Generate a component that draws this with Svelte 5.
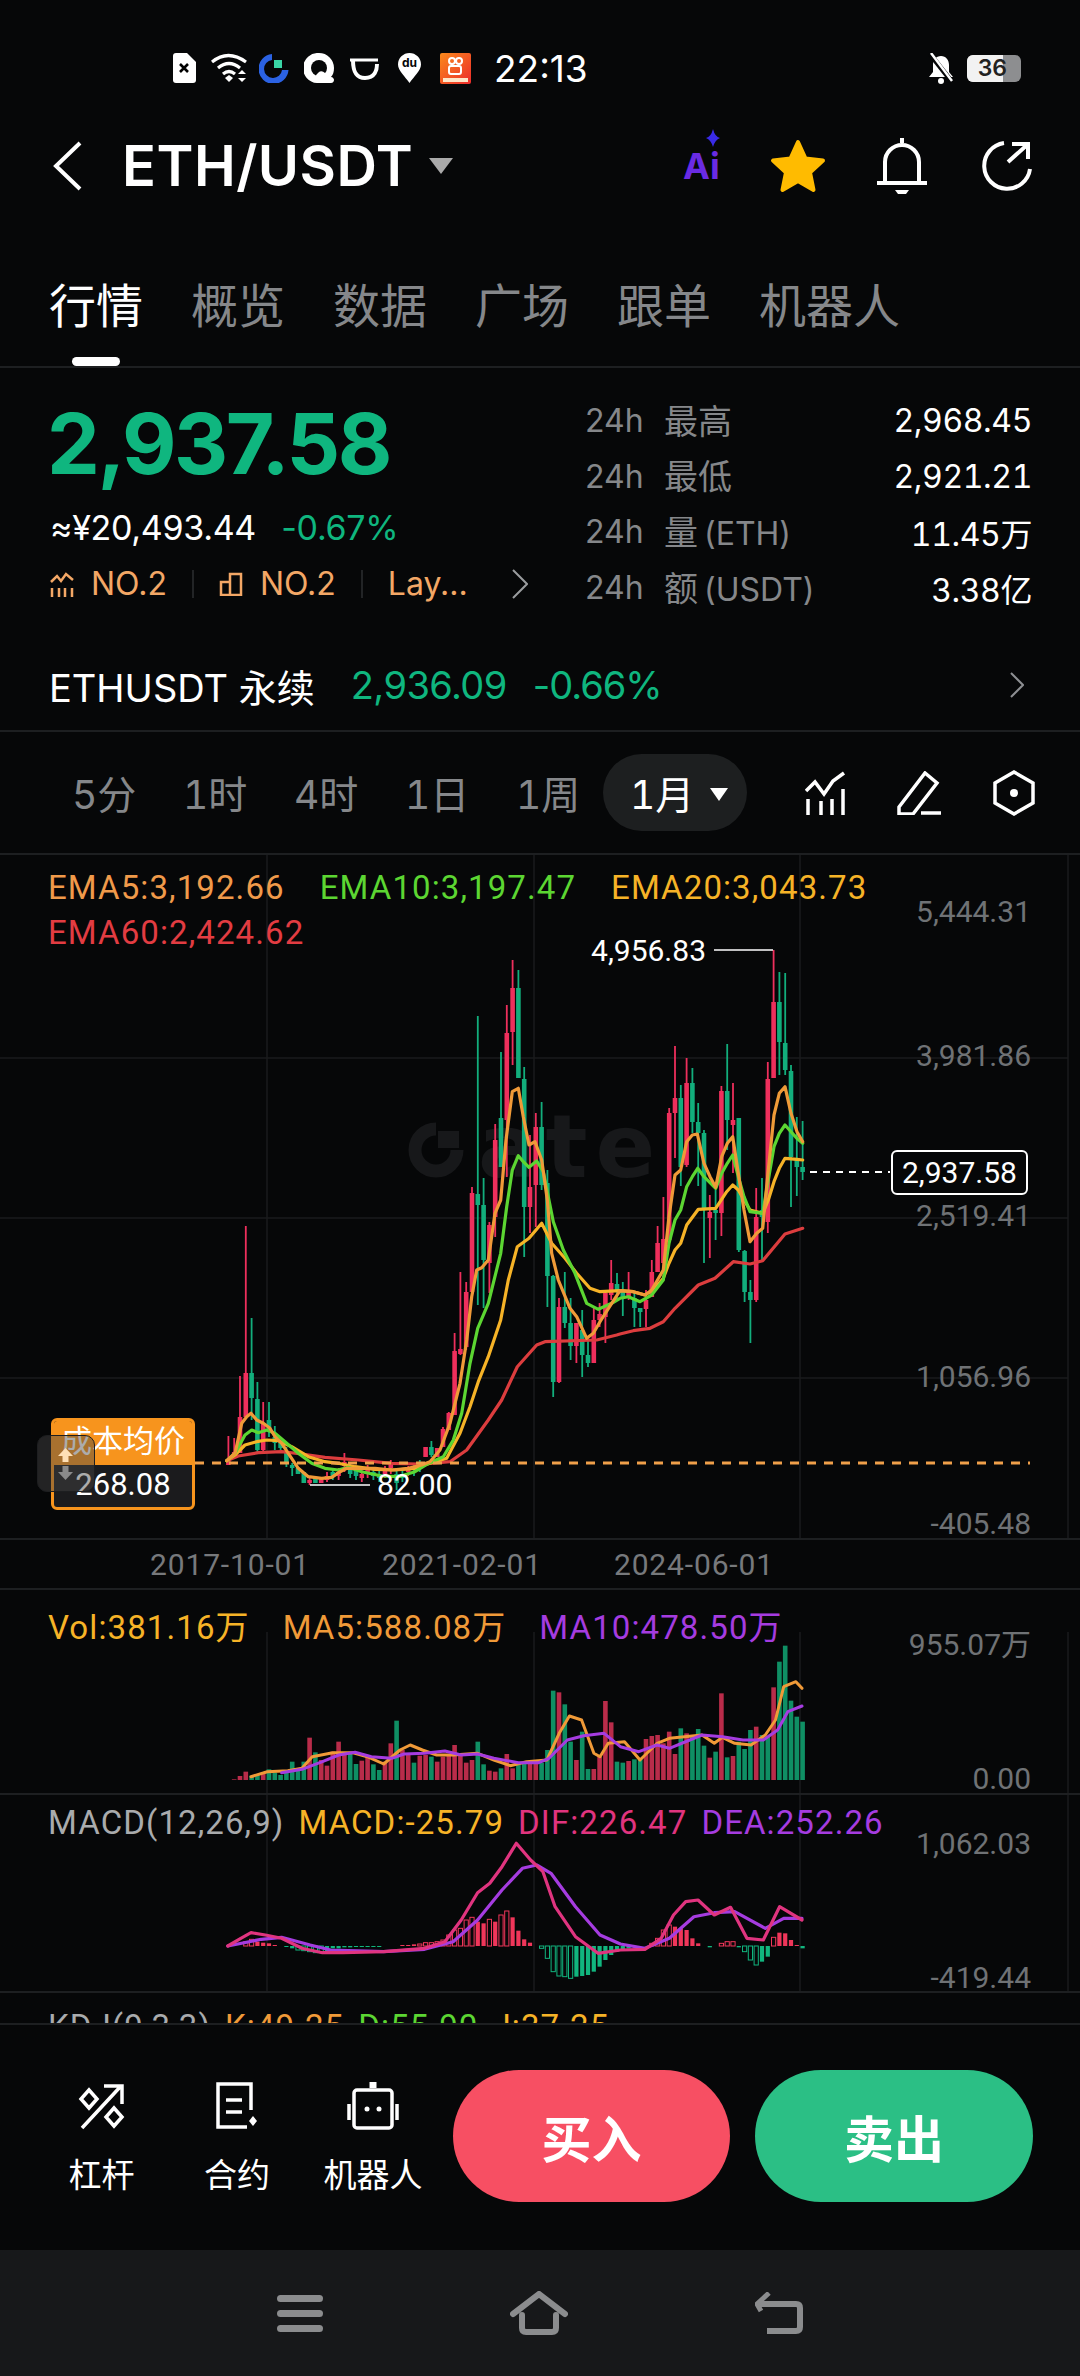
<script>
	const tabs = ['行情', '概览', '数据', '广场', '跟单', '机器人'];
	const stats = [
		['最高', '', '2,968.45'],
		['最低', '', '2,921.21'],
		['量', '(ETH)', '11.45万'],
		['额', '(USDT)', '3.38亿']
	];
	const periods = ['5分', '1时', '4时', '1日', '1周'];
	const gridX = [267, 534, 800, 1068];

	const barX = (i) => 228.4 + 5.8 * i;

	// high, body top, body bottom, low in page pixels
	const candles = [
		[1436, 1460, 1465, 1465, 'r'], [1438, 1452, 1457, 1457, 'r'], [1376, 1417, 1453, 1453, 'r'], [1226, 1373, 1417, 1417, 'r'],
		[1318, 1373, 1398, 1420, 'g'], [1382, 1399, 1450, 1452, 'g'], [1402, 1423, 1450, 1452, 'r'], [1402, 1420, 1432, 1437, 'g'],
		[1426, 1437, 1443, 1450, 'g'], [1443, 1443, 1448, 1450, 'g'], [1447, 1453, 1463, 1467, 'g'], [1463, 1465, 1468, 1476, 'g'],
		[1468, 1468, 1474, 1474, 'g'], [1472, 1472, 1483, 1483, 'g'], [1477, 1480, 1483, 1485, 'r'], [1478, 1478, 1483, 1483, 'g'],
		[1479, 1479, 1483, 1483, 'r'], [1472, 1476, 1480, 1482, 'r'], [1470, 1472, 1477, 1480, 'g'], [1468, 1472, 1476, 1480, 'r'],
		[1453, 1462, 1466, 1472, 'r'], [1462, 1468, 1474, 1478, 'g'], [1466, 1470, 1476, 1480, 'g'], [1470, 1474, 1478, 1482, 'r'],
		[1465, 1470, 1474, 1478, 'r'], [1468, 1472, 1476, 1480, 'g'], [1470, 1474, 1478, 1482, 'g'], [1466, 1470, 1474, 1478, 'r'],
		[1460, 1464, 1468, 1474, 'r'], [1468, 1474, 1483, 1490, 'g'], [1470, 1474, 1478, 1482, 'g'], [1466, 1468, 1472, 1476, 'r'],
		[1464, 1466, 1470, 1476, 'g'], [1460, 1464, 1468, 1472, 'g'], [1447, 1447, 1457, 1457, 'r'], [1441, 1447, 1455, 1457, 'g'],
		[1448, 1448, 1457, 1457, 'r'], [1427, 1429, 1447, 1447, 'r'], [1412, 1413, 1430, 1430, 'r'], [1333, 1351, 1415, 1415, 'r'],
		[1272, 1349, 1354, 1355, 'r'], [1282, 1292, 1347, 1350, 'r'], [1187, 1193, 1292, 1293, 'r'], [1016, 1194, 1205, 1305, 'g'],
		[1178, 1205, 1260, 1308, 'g'], [1222, 1225, 1263, 1293, 'r'], [1124, 1140, 1217, 1237, 'r'], [1052, 1118, 1167, 1167, 'g'],
		[1005, 1033, 1120, 1177, 'r'], [960, 988, 1032, 1065, 'r'], [970, 988, 1078, 1078, 'g'], [1067, 1079, 1207, 1257, 'g'],
		[1135, 1187, 1207, 1233, 'r'], [1113, 1127, 1185, 1227, 'r'], [1102, 1127, 1185, 1190, 'g'], [1170, 1183, 1276, 1307, 'g'],
		[1275, 1276, 1382, 1397, 'g'], [1298, 1307, 1382, 1383, 'r'], [1272, 1307, 1323, 1328, 'g'], [1298, 1323, 1346, 1360, 'g'],
		[1325, 1323, 1346, 1363, 'r'], [1310, 1330, 1355, 1377, 'g'], [1337, 1355, 1363, 1367, 'g'], [1308, 1320, 1363, 1363, 'r'],
		[1303, 1314, 1320, 1327, 'r'], [1293, 1293, 1317, 1343, 'r'], [1260, 1283, 1295, 1300, 'r'], [1273, 1284, 1290, 1300, 'g'],
		[1282, 1290, 1297, 1316, 'g'], [1272, 1290, 1297, 1300, 'r'], [1293, 1298, 1308, 1327, 'g'], [1308, 1308, 1312, 1327, 'g'],
		[1290, 1300, 1309, 1327, 'r'], [1260, 1272, 1297, 1297, 'r'], [1226, 1243, 1272, 1270, 'r'], [1197, 1239, 1263, 1267, 'r'],
		[1108, 1113, 1240, 1240, 'r'], [1046, 1098, 1113, 1158, 'r'], [1085, 1098, 1167, 1186, 'g'], [1058, 1083, 1165, 1167, 'r'],
		[1068, 1083, 1122, 1133, 'g'], [1103, 1122, 1133, 1186, 'g'], [1130, 1133, 1208, 1263, 'g'], [1195, 1212, 1218, 1258, 'r'],
		[1190, 1210, 1213, 1240, 'g'], [1086, 1091, 1213, 1236, 'r'], [1044, 1091, 1120, 1150, 'g'], [1083, 1120, 1125, 1173, 'r'],
		[1118, 1118, 1250, 1252, 'g'], [1250, 1251, 1292, 1302, 'g'], [1280, 1292, 1300, 1343, 'g'], [1188, 1217, 1300, 1302, 'r'],
		[1178, 1210, 1217, 1260, 'g'], [1062, 1079, 1222, 1233, 'r'], [950, 1002, 1078, 1078, 'r'], [972, 1002, 1042, 1075, 'g'],
		[973, 1043, 1070, 1075, 'g'], [1065, 1071, 1157, 1207, 'g'], [1117, 1158, 1167, 1196, 'g'], [1121, 1167, 1172, 1180, 'g']
	];

	// lines were read off 3x crops: [left, top, xScale, x0, y0, x1, y1...]
	function line(...parts) {
		const out = [];
		for (const [ox, oy, sx, ...p] of parts) {
			for (let i = 0; i < p.length; i += 2) {
				out.push((ox + p[i] / sx).toFixed(1) + ',' + (oy + p[i + 1] / 3).toFixed(1));
			}
		}
		return out.join(' ');
	}

	const emaLines = [
		{
			color: '#dc3d3e',
			pts: line(
				[225, 1220, 3, 5, 722, 40, 708, 100, 698, 170, 695, 230, 702, 300, 712, 400, 720, 500, 730, 580, 732],
				[430, 950, 3, 0, 1540, 60, 1535, 110, 1500, 175, 1410, 215, 1350, 262, 1250, 320, 1185, 345, 1175, 500, 1170, 560, 1155],
				[620, 950, 3, 0, 1152, 40, 1142, 90, 1135, 130, 1115, 165, 1075, 235, 1005, 285, 985, 340, 935, 390, 942, 428, 932, 495, 852, 548, 835]
			)
		},
		{
			color: '#f6b327',
			pts: line(
				[225, 1220, 3, 5, 722, 30, 705, 60, 675, 95, 665, 125, 660, 160, 662, 200, 680, 250, 710, 300, 725, 340, 730, 390, 740, 450, 748, 510, 750, 570, 745],
				[430, 950, 3, 0, 1540, 50, 1525, 90, 1450, 120, 1370, 145, 1295, 175, 1220, 212, 1110, 235, 990, 262, 890, 297, 865, 335, 820, 365, 880, 405, 925, 440, 970, 480, 1015, 510, 1025],
				[620, 950, 3, 0, 1022, 40, 1025, 75, 1035, 100, 1020, 130, 985, 147, 940, 165, 900, 182, 880, 200, 825, 235, 778, 287, 775, 320, 725, 338, 705, 355, 720, 372, 750, 390, 780, 428, 790, 445, 750, 462, 695, 478, 655, 495, 625, 531, 628, 548, 630]
			)
		},
		{
			color: '#5cd632',
			pts: line(
				[225, 1220, 3, 5, 722, 30, 700, 60, 645, 80, 630, 100, 638, 125, 630, 150, 640, 180, 665, 220, 700, 260, 730, 300, 745, 340, 750, 370, 742, 410, 755, 470, 768, 520, 770, 570, 755, 610, 730],
				[430, 950, 3, 0, 1538, 40, 1520, 70, 1470, 95, 1390, 120, 1240, 143, 1135, 175, 1060, 212, 910, 230, 770, 247, 660, 265, 617, 280, 635, 297, 652, 320, 633, 340, 665, 370, 815, 400, 900, 435, 970, 470, 1060, 505, 1078, 545, 1060],
				[620, 950, 3, 0, 1045, 25, 1040, 60, 1055, 95, 1035, 130, 990, 147, 880, 165, 810, 182, 780, 200, 710, 217, 680, 233, 655, 252, 680, 287, 715, 305, 670, 322, 640, 338, 615, 355, 680, 372, 740, 390, 785, 428, 790, 445, 690, 462, 590, 478, 550, 495, 525, 513, 545, 531, 565, 548, 580]
			)
		},
		{
			color: '#f09a38',
			pts: line(
				[225, 1220, 3, 5, 722, 30, 700, 50, 610, 65, 590, 78, 580, 95, 600, 115, 610, 135, 625, 150, 650, 170, 670, 190, 700, 220, 745, 250, 770, 290, 775, 320, 772, 345, 755, 365, 745, 400, 745, 450, 745, 500, 750, 550, 745, 590, 735],
				[430, 950, 3, 0, 1535, 30, 1500, 60, 1420, 90, 1300, 110, 1170, 125, 1040, 140, 960, 155, 953, 175, 930, 195, 790, 212, 750, 228, 570, 247, 425, 265, 415, 280, 500, 297, 585, 315, 575, 335, 630, 352, 750, 365, 910, 385, 990, 420, 1075, 440, 1100, 470, 1165, 490, 1150, 510, 1115, 545, 1060],
				[620, 950, 3, 0, 1022, 40, 1025, 75, 1035, 95, 1020, 130, 960, 147, 800, 165, 675, 182, 660, 200, 575, 217, 555, 232, 552, 252, 640, 270, 680, 287, 712, 305, 620, 322, 580, 338, 560, 355, 670, 372, 780, 390, 875, 410, 850, 428, 835, 445, 660, 462, 495, 478, 430, 495, 410, 513, 490, 531, 545, 548, 575]
			)
		}
	];

	// bar tops, negative = red
	const volBars = [
		-598, -588, -575, 587, 585, -580, 568, 578, 585, 575,
		545, 570, 545, -473, 517, -540, -557, -515, -485, -525,
		522, 552, -542, -530, 553, 570, -545, -490, 422, -510,
		-525, 548, -527, -525, 530, -545, -530, -525, -495, -520,
		-548, -540, 485, 553, -572, -575, 565, -522, -565, 550,
		548, -545, -548, 548, 510, 332, -337, 373, 485, -540,
		455, 567, -567, -530, -363, -427, 545, 548, -543, 538,
		538, -477, -468, -465, -490, -455, -522, 445, -460, 465,
		447, 497, -533, 515, -340, 532, -528, 485, 507, 450,
		-440, 465, 470, -322, 245, 197, 362, 410, 425
	];
	const volLines = [
		{
			color: '#f09a38',
			pts: line([200, 1580, 2.45, 125, 590, 165, 575, 215, 572, 250, 565, 275, 530, 325, 518, 375, 518, 410, 530, 450, 552, 490, 510, 515, 495, 545, 510, 580, 525, 620, 525, 680, 520, 720, 540, 760, 557, 800, 545, 850, 540, 880, 460, 905, 408, 935, 420, 965, 520, 980, 530, 1000, 490, 1040, 485, 1078, 540, 1120, 490, 1150, 475, 1230, 465, 1260, 490, 1280, 472, 1310, 490, 1350, 495, 1385, 465, 1410, 420, 1430, 320, 1460, 305, 1475, 325])
		},
		{
			color: '#a53ce0',
			pts: line([200, 1580, 2.45, 200, 578, 250, 568, 300, 545, 340, 525, 380, 517, 420, 530, 470, 535, 500, 522, 550, 520, 600, 513, 640, 525, 680, 522, 720, 535, 780, 548, 830, 548, 855, 535, 900, 480, 940, 467, 990, 460, 1030, 500, 1075, 515, 1120, 495, 1150, 505, 1200, 480, 1230, 465, 1280, 470, 1330, 480, 1380, 480, 1415, 450, 1440, 395, 1475, 378])
		}
	];

	// index, top in crop px, hollow
	const hist = [
		[3, 1085, 1], [4, 1078, 1], [5, 1085], [6, 1088], [7, 1090], [8, 1095],
		[10, 1101], [11, 1105], [12, 1110, 1], [13, 1112, 1], [14, 1115, 1], [15, 1118, 1], [16, 1118, 1], [17, 1113], [18, 1105], [19, 1105], [20, 1102], [21, 1102], [22, 1101], [23, 1101], [24, 1101], [25, 1101], [26, 1101],
		[30, 1095], [31, 1095], [32, 1093], [33, 1092, 1], [34, 1088, 1], [35, 1088, 1], [36, 1085, 1], [37, 1080, 1], [38, 1065, 1], [39, 1050, 1], [40, 1045, 1], [41, 1020, 1], [42, 1012, 1], [43, 1025], [44, 1030], [45, 1018, 1], [46, 1025], [47, 1005, 1], [48, 993, 1], [49, 1012], [50, 1052], [51, 1078], [52, 1088],
		[54, 1105, 1], [55, 1135, 1], [56, 1175, 1], [57, 1188, 1], [58, 1190, 1], [59, 1195, 1], [60, 1190], [61, 1188], [62, 1185], [63, 1175], [64, 1160], [65, 1140], [66, 1125], [67, 1115], [68, 1110], [69, 1105], [70, 1100],
		[73, 1090, 1], [74, 1075, 1], [75, 1050, 1], [76, 1035, 1], [77, 1040], [78, 1045], [79, 1050], [80, 1075], [81, 1090], [83, 1102], [85, 1090, 1], [86, 1085, 1], [87, 1085, 1],
		[88, 1102], [89, 1115, 1], [90, 1140, 1], [91, 1155, 1], [92, 1145], [93, 1130], [94, 1072, 1], [95, 1058], [96, 1060], [97, 1080], [98, 1095], [99, 1105]
	];
	const difPts = line([200, 1580, 2.45, 68, 1098, 100, 1075, 125, 1058, 160, 1065, 200, 1075, 250, 1105, 300, 1118, 350, 1118, 450, 1115, 550, 1105, 600, 1085, 640, 1020, 680, 938, 710, 910, 740, 860, 775, 790, 810, 840, 840, 875, 870, 980, 920, 1070, 975, 1120, 1030, 1110, 1090, 1108, 1130, 1075, 1160, 1005, 1190, 965, 1220, 960, 1260, 1005, 1300, 982, 1340, 1075, 1380, 1080, 1420, 980, 1475, 1020]);
	const deaPts = line([200, 1580, 2.45, 68, 1098, 150, 1078, 200, 1072, 270, 1095, 320, 1110, 450, 1115, 550, 1108, 620, 1085, 680, 1020, 740, 930, 790, 865, 825, 855, 860, 880, 920, 980, 980, 1065, 1030, 1092, 1090, 1105, 1150, 1075, 1210, 1010, 1260, 998, 1310, 995, 1385, 1045, 1430, 1015, 1475, 1015]);
</script>

<div class="page">
	<div class="status">
		<svg class="si" style="margin-left:172px" width="24" height="30" viewBox="0 0 24 30"><path d="M4 0h11l9 9v18a3 3 0 0 1-3 3H4a3 3 0 0 1-3-3V3a3 3 0 0 1 3-3z" fill="#fff" /><path d="M8 11l8 8M16 11l-8 8" stroke="#000" stroke-width="2.6" /></svg>
		<svg class="si" style="margin-left:15px" width="37" height="30" viewBox="0 0 37 30" fill="none" stroke="#fff" stroke-width="3.2"><path d="M1 9q16-13 34 0M7 15q11-9 22 0M12 21q6-5 12 0" /><path d="M14 25l4-3 4 3-4 4z" fill="#fff" stroke="none" /><path d="M27 21l4-4 4 4zM27 25l4 4 4-4z" fill="#fff" stroke="none" /></svg>
		<svg class="si" style="margin-left:11px" width="30" height="30" viewBox="0 0 30 30"><path d="M13 1v6a9 9 0 1 0 10 10h6.500A15 15 0 1 1 13 1z" fill="#2b62e3" /><rect x="15" y="7" width="8" height="8" fill="#3ad6a6" /></svg>
		<svg class="si" style="margin-left:15px" width="30" height="30" viewBox="0 0 30 30"><path d="M15 0a15 15 0 0 1 15 15c0 4-1 7-3 9 2 0 3 2 3 3s-1 3-3 3H13A15 15 0 0 1 15 0z" fill="#fff" /><circle cx="15" cy="15" r="8" fill="#060708" /><path d="M11 24q5-9 10-4l5 6H11z" fill="#fff" /></svg>
		<svg class="si" style="margin-left:16px" width="30" height="24" viewBox="0 0 30 24" fill="none" stroke="#fff" stroke-width="4"><path d="M0 4h28" stroke-width="3" /><path d="M3 4c0 10 2 18 12 18s12-8 12-14" /></svg>
		<svg class="si" style="margin-left:18px" width="23" height="30" viewBox="0 0 23 30"><path d="M11.500 0a11.500 11.500 0 0 1 11.500 11.500c0 6-7 12-11.500 18.500c-4.500-6.500-11.500-12.500-11.500-18.500a11.500 11.500 0 0 1 11.500-11.500z" fill="#fff" /><text x="11.500" y="14" text-anchor="middle" class="du">du</text></svg>
		<svg class="si" style="margin-left:19px" width="31" height="31" viewBox="0 0 31 31"><defs><linearGradient id="ks" x1="0" y1="0" x2="1" y2="1"><stop offset="0" stop-color="#fb8a1c" /><stop offset="1" stop-color="#ec2b2b" /></linearGradient></defs><rect width="31" height="31" rx="2" fill="url(#ks)" /><circle cx="12" cy="8" r="3" fill="none" stroke="#fff" stroke-width="2" /><circle cx="19" cy="8" r="3" fill="none" stroke="#fff" stroke-width="2" /><rect x="9" y="13" width="12" height="8" rx="2" fill="none" stroke="#fff" stroke-width="2" /><rect x="3" y="25" width="25" height="4" fill="#fde6c8" /></svg>
		<span class="time">22:13</span>
		<svg class="mute" width="28" height="31" viewBox="0 0 28 31"><path d="M14 3c5 0 8 4 8 9v7l4 5H2l4-5v-7c0-5 3-9 8-9z" fill="#fff" /><circle cx="14" cy="28" r="3" fill="#fff" /><path d="M3 1l22 28" stroke="#060708" stroke-width="5" /><path d="M4 0l21 28" stroke="#fff" stroke-width="2.500" /></svg>
		<div class="battery"><span class="fill"></span><span class="num">36</span></div>
	</div>

	<header class="head">
		<svg width="30" height="50" viewBox="0 0 30 50" fill="none" stroke="#fff" stroke-width="4"><path d="M28 2L4 25l24 23" /></svg>
		<span class="pair">ETH/USDT</span>
		<i class="caret"></i>
		<div class="head-icons">
			<svg class="ai" width="42" height="60" viewBox="0 0 42 60"><path d="M30 0q2 8 7 9-5 2-7 9-2-7-7-9 5-1 7-9z" fill="#3a2be8" /><text x="0" y="50" class="ai-text">Ai</text></svg>
			<svg class="star" width="58" height="56" viewBox="0 0 58 56"><path d="M29 4l7.500 16.500 17.500 2-13 12 3.500 17.500-15.500-9-15.500 9 3.500-17.500-13-12 17.500-2z" fill="#ffbb00" stroke="#ffbb00" stroke-width="4" stroke-linejoin="round" /></svg>
			<svg width="52" height="56" viewBox="0 0 52 56" fill="none" stroke="#fff" stroke-width="4"><path d="M26 0v5M9 44V24a17 17 0 0 1 34 0v20M1 45h50" /><path d="M19 52h14l-3 4h-8z" fill="#fff" stroke="none" /></svg>
			<svg width="52" height="52" viewBox="0 0 52 52" fill="none" stroke="#fff" stroke-width="4"><path d="M24 3a23 23 0 1 0 26 26" /><path d="M28 22L47 5M32 4h16v15" /></svg>
		</div>
	</header>

	<nav class="tabs">
		{#each tabs as tab, i}
			<div class="tab" class:on={i === 0}>
				<span>{tab}</span>
				{#if i === 0}<b></b>{/if}
			</div>
		{/each}
	</nav>

	<section class="summary">
		<div class="left">
			<div class="price">2,937.58</div>
			<div class="fiat">≈¥20,493.44 <em>-0.67%</em></div>
			<div class="tags">
				<svg width="24" height="26" viewBox="0 0 24 26" fill="none" stroke="#f3a766" stroke-width="2.500"><path d="M1 11l6-6 4 5 5-7 7 6M2 17v9M9 17v9M15 17v9M22 17v9" /></svg>
				<span>NO.2</span>
				<i class="sep"></i>
				<svg width="24" height="24" viewBox="0 0 24 24" fill="none" stroke="#f3a766" stroke-width="2.500"><path d="M2 10h9v13H2zM11 2h11v21H11z" /></svg>
				<span>NO.2</span>
				<i class="sep"></i>
				<span>Lay...</span>
				<svg class="more" width="16" height="30" viewBox="0 0 16 30" fill="none" stroke="#9a9c9e" stroke-width="2"><path d="M1 1l14 14L1 29" /></svg>
			</div>
		</div>
		<div class="right">
			{#each stats as [label, unit, value]}
				<div class="stat">
					<span class="h">24h</span>
					<span class="lab">{label}{#if unit}<small>{unit}</small>{/if}</span>
					<span class="val">{value}</span>
				</div>
			{/each}
		</div>
	</section>

	<section class="perp">
		<span class="perp-name">ETHUSDT 永续</span>
		<span class="green p1">2,936.09</span>
		<span class="green p2">-0.66%</span>
		<svg class="perp-go" width="14" height="26" viewBox="0 0 14 26" fill="none" stroke="#8d8f92" stroke-width="2"><path d="M1 1l12 12L1 25" /></svg>
	</section>

	<section class="periods">
		{#each periods as p}
			<span class="period">{p}</span>
		{/each}
		<span class="pill">1月<i class="caret small"></i></span>
		<div class="tools">
			<svg width="42" height="44" viewBox="0 0 42 44" fill="none" stroke="#fff" stroke-width="3.500"><path d="M1 20l9-9 9 12 9-13 11-8" /><path d="M3 28v16M16 30v14M27 28v16M38 18v26" /></svg>
			<svg width="46" height="44" viewBox="0 0 46 44" fill="none" stroke="#fff" stroke-width="3.500"><path d="M2 36L28 2l12 10-24 31H2zM24 42h20" /></svg>
			<svg width="42" height="46" viewBox="0 0 42 46" fill="none" stroke="#fff" stroke-width="3.500"><path d="M21 2l19 11v20L21 44 2 33V13z" /><circle cx="21" cy="23" r="4" fill="#fff" stroke="none" /></svg>
		</div>
	</section>

	<section class="pane main">
		<svg class="canvas" viewBox="0 855 1080 683">
			{#each [1058, 1218, 1378] as y}
				<line x1="0" x2="1068" y1={y} y2={y} class="grid" />
			{/each}
			{#each gridX as x}
				<line x1={x} x2={x} y1="855" y2="1538" class="grid" />
			{/each}
			<path d="M436 1129A21 21 0 1 0 457 1150" class="wm-ring" />
			<rect x="438" y="1131" width="21" height="17" class="wm-dot" />
			<text x="478" y="1177" class="wm">ate</text>
			{#each candles as [hi, top, bot, lo, side], i}
				<line x1={barX(i)} x2={barX(i)} y1={hi} y2={lo} class="wick {side}" />
				<rect x={barX(i) - 2.3} y={top} width="4.6" height={Math.max(bot - top, 2)} class={side} />
			{/each}
			{#each emaLines as l}
				<polyline points={l.pts} fill="none" stroke={l.color} stroke-width="3.2" stroke-linejoin="round" stroke-linecap="round" />
			{/each}
			<line x1="195" x2="1030" y1="1463" y2="1463" class="cost" />
			<text x="1031" y="922" class="axis">5,444.31</text>
			<text x="1031" y="1066" class="axis">3,981.86</text>
			<text x="1031" y="1226" class="axis">2,519.41</text>
			<text x="1031" y="1387" class="axis">1,056.96</text>
			<text x="1031" y="1534" class="axis">-405.48</text>
			<text x="706" y="961" class="mark end">4,956.83</text>
			<line x1="714" x2="773" y1="950" y2="950" class="leader" />
			<text x="377" y="1495" class="mark">82.00</text>
			<line x1="310" x2="370" y1="1485" y2="1485" class="leader" />
			<line x1="810" x2="890" y1="1172" y2="1172" class="now" />
		</svg>
		<div class="legend">
			<span style="color:#f09a4a">EMA5:3,192.66</span>
			<span style="color:#5cd632">EMA10:3,197.47</span>
			<span style="color:#f6b327">EMA20:3,043.73</span>
			<span style="color:#e23c42">EMA60:2,424.62</span>
		</div>
		<div class="cost-tag">
			<div class="cost-top">成本均价</div>
			<div class="cost-bot">268.08</div>
		</div>
		<div class="toggle">
			<svg width="15" height="32" viewBox="0 0 15 32"><path d="M7.500 0L15 8h-4.500v6h-6V8H0z" fill="#ffe0b5" /><path d="M4.500 18h6v6H15l-7.500 8L0 24h4.500z" fill="#8a8a8a" /></svg>
		</div>
		<div class="now-tag">2,937.58</div>
	</section>

	<div class="dates">
		<span>2017-10-01</span>
		<span>2021-02-01</span>
		<span>2024-06-01</span>
	</div>

	<section class="pane vol">
		<svg class="canvas" viewBox="0 1590 1080 203">
			{#each gridX as x}
				<line x1={x} x2={x} y1="1632" y2="1793" class="grid" />
			{/each}
			{#each volBars as t, i}
				<rect x={barX(i + 1) - 2.3} y={1580 + Math.abs(t) / 3} width="4.6" height={200 - Math.abs(t) / 3} class={t < 0 ? 'vr' : 'vg'} />
			{/each}
			{#each volLines as l}
				<polyline points={l.pts} fill="none" stroke={l.color} stroke-width="3" stroke-linejoin="round" stroke-linecap="round" />
			{/each}
			<text x="1031" y="1655" class="axis">955.07万</text>
			<text x="1031" y="1789" class="axis">0.00</text>
		</svg>
		<div class="legend">
			<span style="color:#f6b327">Vol:381.16万</span>
			<span style="color:#f09a38">MA5:588.08万</span>
			<span style="color:#a53ce0">MA10:478.50万</span>
		</div>
	</section>

	<section class="pane macd">
		<svg class="canvas" viewBox="0 1795 1080 196">
			{#each gridX as x}
				<line x1={x} x2={x} y1="1795" y2="1991" class="grid" />
			{/each}
			{#each hist as [i, t, hollow]}
				{@const up = t < 1098}
				<rect
					x={barX(i) - 2.1}
					y={up ? 1580 + t / 3 : 1946}
					width="4.2"
					height={Math.abs(t - 1098) / 3}
					fill={hollow ? 'none' : up ? '#f0365a' : '#11b57e'}
					stroke={up ? '#f0365a' : '#11b57e'}
					stroke-width={hollow ? 1 : 0}
				/>
			{/each}
			<polyline points={deaPts} fill="none" stroke="#a53ce0" stroke-width="3.2" stroke-linejoin="round" stroke-linecap="round" />
			<polyline points={difPts} fill="none" stroke="#e0347f" stroke-width="3.2" stroke-linejoin="round" stroke-linecap="round" />
			<text x="1031" y="1854" class="axis">1,062.03</text>
			<text x="1031" y="1988" class="axis">-419.44</text>
		</svg>
		<div class="legend tight">
			<span style="color:#a9abad">MACD(12,26,9)</span>
			<span style="color:#f6b327">MACD:-25.79</span>
			<span style="color:#e0347f">DIF:226.47</span>
			<span style="color:#a53ce0">DEA:252.26</span>
		</div>
	</section>

	<section class="kdj">
		<div class="legend tight">
			<span style="color:#a9abad">KDJ(9,3,3)</span>
			<span style="color:#f09a38">K:49.25</span>
			<span style="color:#5cd632">D:55.90</span>
			<span style="color:#f6b327">J:37.25</span>
		</div>
	</section>

	<footer class="actions">
		<div class="act">
			<svg width="48" height="48" viewBox="0 0 48 48" fill="none" stroke="#fff" stroke-width="3.500"><path d="M4 46L43 4M26 4h18v18" /><path d="M11 8l8 9-8 9-8-9zM36 26l8 9-8 9-8-9z" /></svg>
			<span>杠杆</span>
		</div>
		<div class="act">
			<svg width="48" height="48" viewBox="0 0 48 48" fill="none" stroke="#fff" stroke-width="3.500"><path d="M38 28V2H5v43h29M13 18h16M13 30h16" /><path d="M40 34l4 5-4 5-4-5z" fill="#fff" stroke="none" /></svg>
			<span>合约</span>
		</div>
		<div class="act">
			<svg width="52" height="48" viewBox="0 0 52 48" fill="none" stroke="#fff" stroke-width="3.500"><path d="M26 0v6" stroke-width="7" /><rect x="7" y="8" width="38" height="38" rx="3" /><path d="M2 22v16M50 22v16" /><circle cx="20" cy="27" r="2.500" fill="#fff" stroke="none" /><circle cx="32" cy="27" r="2.500" fill="#fff" stroke="none" /></svg>
			<span>机器人</span>
		</div>
		<div class="btn buy">买入</div>
		<div class="btn sell">卖出</div>
	</footer>

	<div class="navbar">
		<svg width="46" height="37" viewBox="0 0 46 37"><rect width="46" height="7" rx="3.500" /><rect y="15" width="46" height="7" rx="3.500" /><rect y="30" width="46" height="7" rx="3.500" /></svg>
		<svg width="58" height="44" viewBox="0 0 58 44" fill="none" stroke-width="6" stroke-linecap="round"><path d="M3 23L29 3l26 20M12 24v13q0 4 4 4h26q4 0 4-4V24" /></svg>
		<svg width="48" height="42" viewBox="0 0 48 42" fill="none" stroke-width="6"><path d="M4 12h37q4 0 4 4v19q0 4-4 4H12" /><path d="M14 1L2 12l4 7" stroke-width="5" /></svg>
	</div>
</div>

<style>
	:global(body) {
		background: #060708;
	}
	.page * {
		box-sizing: border-box;
	}
	.page {
		width: 1080px;
		height: 2376px;
		overflow: hidden;
		display: flex;
		flex-direction: column;
		background: #060708;
		color: #fff;
		font-family: Inter, 'Noto Sans CJK SC', sans-serif;
	}
	.status {
		height: 136px;
		flex: none;
		display: flex;
		align-items: center;
	}
	.si {
		flex: none;
	}
	.du {
		font: 700 12px Inter, sans-serif;
		fill: #060708;
	}
	.time {
		margin-left: 23px;
		font-size: 37px;
		line-height: 1;
	}
	.mute {
		margin-left: 339px;
	}
	.battery {
		position: relative;
		margin-left: 12px;
		width: 54px;
		height: 27px;
		border-radius: 6px;
		background: #8d8e90;
		overflow: hidden;
	}
	.fill {
		display: block;
		width: 36px;
		height: 100%;
		background: #f2f2f2;
	}
	.num {
		position: absolute;
		left: 11px;
		top: 0;
		font-size: 23px;
		font-weight: 600;
		line-height: 27px;
		color: #222;
	}
	.head {
		height: 60px;
		flex: none;
		display: flex;
		align-items: center;
		padding-left: 52px;
	}
	.pair {
		margin-left: 40px;
		font-size: 56px;
		font-weight: 600;
		line-height: 60px;
		letter-spacing: 0.5px;
	}
	.caret {
		margin-left: 16px;
		width: 0;
		height: 0;
		border-left: 12px solid transparent;
		border-right: 12px solid transparent;
		border-top: 16px solid #aaa;
	}
	.caret.small {
		display: inline-block;
		margin-left: 16px;
		vertical-align: 8px;
		border-left-width: 9px;
		border-right-width: 9px;
		border-top: 13px solid #fff;
	}
	.head-icons {
		margin-left: auto;
		padding-right: 48px;
		display: flex;
		align-items: center;
		gap: 52px;
	}
	.ai {
		margin-top: -14px;
		margin-right: -8px;
	}
	.star {
		margin-right: -3px;
	}
	.ai-text {
		font: 700 36px Inter, sans-serif;
		fill: #6a2be4;
	}
	.tabs {
		flex: none;
		display: flex;
		align-items: flex-start;
		gap: 48px;
		padding: 87px 0 0 49px;
		border-bottom: 2px solid #1d1f21;
	}
	.tab {
		display: flex;
		flex-direction: column;
		align-items: center;
		gap: 28px;
		font-size: 47px;
		line-height: 46px;
		color: #85878a;
	}
	.tab.on {
		color: #fff;
	}
	.tab b {
		width: 48px;
		height: 9px;
		border-radius: 5px;
		background: #fff;
	}
	.summary {
		height: 272px;
		flex: none;
		display: flex;
	}
	.left {
		width: 585px;
		flex: none;
		padding: 34px 0 0 50px;
	}
	.price {
		margin-left: -3px;
		font-size: 84px;
		font-weight: 700;
		line-height: 84px;
		letter-spacing: -2.500px;
		color: #0fb67f;
	}
	.fiat {
		margin-top: 22px;
		font-size: 34px;
		line-height: 40px;
		letter-spacing: -0.3px;
	}
	.fiat em {
		margin-left: 16px;
		font-style: normal;
		color: #0fb67f;
	}
	.tags {
		margin-top: 16px;
		display: flex;
		align-items: center;
		font-size: 32px;
		line-height: 40px;
		color: #f3a766;
	}
	.tags span {
		margin-left: 17px;
	}
	.sep {
		width: 2px;
		height: 28px;
		margin: 0 25px;
		background: #222426;
	}
	.sep + span {
		margin-left: 0;
	}
	.more {
		margin-left: 44px;
	}
	.right {
		flex: 1;
		padding: 25px 48px 0 0;
		font-size: 32px;
	}
	.stat {
		height: 55.6px;
		display: flex;
		align-items: center;
		color: #85878a;
	}
	.h {
		width: 79px;
	}
	.lab {
		margin-top: -3px;
		font-size: 34px;
	}
	.lab small {
		font-size: 32px;
		margin-left: 6px;
	}
	.val {
		margin-left: auto;
		color: #fff;
		font-variant-numeric: tabular-nums;
		letter-spacing: -0.4px;
	}
	.perp {
		height: 92px;
		flex: none;
		display: flex;
		align-items: center;
		padding-left: 49px;
		font-size: 38px;
		border-bottom: 2px solid #1d1f21;
	}
	.green {
		color: #0fb67f;
		letter-spacing: -0.6px;
	}
	.p1 {
		margin-left: 36px;
	}
	.p2 {
		margin-left: 26px;
		letter-spacing: -1px;
	}
	.perp-go {
		margin-left: auto;
		margin-right: 56px;
	}
	.periods {
		height: 123px;
		flex: none;
		display: flex;
		align-items: center;
		padding-left: 72px;
		font-size: 39px;
		font-variant-numeric: tabular-nums;
		color: #85878a;
		border-bottom: 2px solid #1d1f21;
	}
	.period {
		width: 111px;
		flex: none;
		padding-top: 5px;
		line-height: 40px;
	}
	.pill {
		flex: none;
		margin-left: -24px;
		width: 144px;
		height: 77px;
		padding-left: 27px;
		line-height: 82px;
		border-radius: 39px;
		background: #1d1f20;
		color: #fff;
	}
	.tools {
		display: flex;
		align-items: center;
		margin-left: 58px;
		gap: 50px;
	}
	.pane {
		position: relative;
		flex: none;
	}
	.main {
		height: 685px;
		border-bottom: 2px solid #1d1f21;
	}
	.vol {
		height: 207px;
		border-top: 2px solid #1d1f21;
		border-bottom: 2px solid #1d1f21;
	}
	.macd {
		height: 198px;
		border-bottom: 2px solid #1d1f21;
	}
	.canvas {
		position: absolute;
		left: 0;
		top: 0;
		width: 1080px;
		height: 100%;
	}
	.canvas text {
		font-family: Roboto, 'Noto Sans CJK SC', sans-serif;
	}
	.grid {
		stroke: #1a1b1d;
		stroke-width: 1.5;
	}
	.canvas .wm {
		font-family: 'DejaVu Sans', sans-serif;
		font-size: 88px;
		font-weight: 700;
		letter-spacing: 8px;
		fill: #17181a;
	}
	.wm-ring {
		fill: none;
		stroke: #17181a;
		stroke-width: 13;
	}
	.wm-dot {
		fill: #17181a;
	}
	.wick {
		stroke-width: 1.8;
	}
	.wick.r {
		stroke: #ee2f5c;
	}
	.wick.g {
		stroke: #12ae7c;
	}
	rect.r {
		fill: #ee2f5c;
	}
	rect.g {
		fill: #12ae7c;
	}
	.vr {
		fill: #b92c4a;
	}
	.vg {
		fill: #0f8f64;
	}
	.cost {
		stroke: #f0a04a;
		stroke-width: 3;
		stroke-dasharray: 9 8;
	}
	.axis {
		font-size: 30px;
		fill: #6f7275;
		text-anchor: end;
	}
	.mark {
		font-size: 30px;
		fill: #fff;
	}
	.mark.end {
		text-anchor: end;
	}
	.leader {
		stroke: #fff;
		stroke-width: 1.5;
	}
	.now {
		stroke: #fff;
		stroke-width: 2;
		stroke-dasharray: 7 6;
	}
	.legend {
		position: relative;
		display: flex;
		flex-wrap: wrap;
		width: 900px;
		padding: 15px 0 0 48px;
		column-gap: 35px;
		row-gap: 9px;
		font-family: Roboto, 'Noto Sans CJK SC', sans-serif;
		font-size: 33px;
		line-height: 36px;
		letter-spacing: 1.100px;
	}
	.vol .legend {
		padding-top: 20px;
		column-gap: 33px;
	}
	.legend.tight {
		padding-top: 10px;
		column-gap: 14px;
	}
	.kdj .legend.tight {
		padding-top: 16px;
	}
	.cost-tag {
		position: absolute;
		left: 51px;
		top: 563px;
		width: 144px;
		height: 92px;
		border: 3px solid #f7941d;
		border-radius: 6px;
		overflow: hidden;
		background: #1b1b1d;
		font-family: Roboto, 'Noto Sans CJK SC', sans-serif;
		font-size: 31px;
		text-align: center;
	}
	.cost-top {
		height: 44px;
		line-height: 42px;
		background: #f7941d;
	}
	.cost-bot {
		line-height: 40px;
	}
	.toggle {
		position: absolute;
		left: 37px;
		top: 580px;
		width: 58px;
		height: 57px;
		padding: 12px 0 0 20px;
		border-radius: 10px;
		background: rgba(70, 70, 70, 0.45);
		border: 1px solid #1d1e20;
	}
	.now-tag {
		position: absolute;
		left: 891px;
		top: 295px;
		width: 137px;
		height: 45px;
		border: 2px solid #fff;
		border-radius: 6px;
		background: #060708;
		font-family: Roboto, sans-serif;
		font-size: 30px;
		line-height: 41px;
		text-align: center;
	}
	.dates {
		height: 48px;
		flex: none;
		display: flex;
		padding-left: 150px;
		gap: 72px;
		align-items: center;
		font-family: Roboto, sans-serif;
		font-size: 30px;
		letter-spacing: 0.850px;
		color: #77797c;
	}
	.kdj {
		height: 30px;
		flex: none;
		overflow: hidden;
	}
	.actions {
		height: 227px;
		flex: none;
		display: flex;
		align-items: center;
		border-top: 2px solid #1d1f21;
		background: #060708;
	}
	.act {
		width: 136px;
		flex: none;
		display: flex;
		flex-direction: column;
		align-items: center;
		gap: 25px;
		margin-top: 2px;
		font-size: 33px;
		line-height: 40px;
	}
	.act:first-child {
		width: 135px;
		margin-left: 34px;
	}
	.act:nth-child(3) {
		margin-right: 12px;
	}
	.btn {
		height: 132px;
		margin-top: -3px;
		border-radius: 66px;
		display: flex;
		align-items: center;
		justify-content: center;
		font-size: 50px;
		font-weight: 700;
	}
	.buy {
		width: 277px;
		background: #f74f63;
	}
	.sell {
		width: 278px;
		margin-left: 25px;
		background: #2bbf85;
	}
	.navbar {
		flex: 1;
		display: flex;
		align-items: center;
		padding: 0 277px;
		justify-content: space-between;
		background: #17181a;
	}
	.navbar svg {
		fill: #8b8c8e;
		stroke: #8b8c8e;
		stroke-width: 0;
	}
	.navbar svg:not(:first-child) {
		fill: none;
		stroke-width: 6;
	}
</style>
